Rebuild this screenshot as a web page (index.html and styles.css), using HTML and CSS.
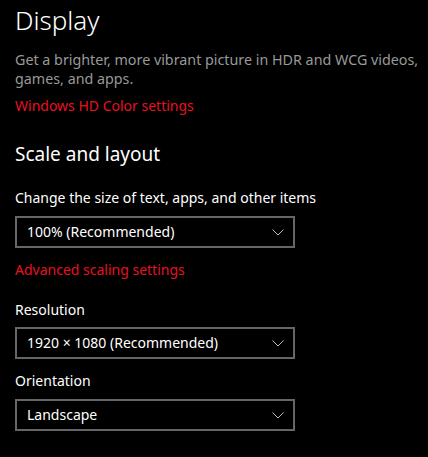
FILE: index.html
```html
<!DOCTYPE html>
<html>
<head>
<meta charset="utf-8">
<link rel="stylesheet" href="styles.css">
</head>
<body>
<div class="page">
  <h1 class="title">Display</h1>
  <p class="desc">Get a brighter, more vibrant picture in HDR and WCG videos, games, and apps.</p>
  <a class="link link-hd">Windows HD Color settings</a>
  <h2 class="section">Scale and layout</h2>
  <div class="label label-first">Change the size of text, apps, and other items</div>
  <div class="select select-a">
    <span>100% (Recommended)</span>
    <svg class="chev" width="12" height="7" viewBox="0 0 12 7"><polyline points="0.5,0.5 6,6 11.5,0.5" fill="none" stroke="#bdbdbd" stroke-width="1"/></svg>
  </div>
  <a class="link link-adv">Advanced scaling settings</a>
  <div class="label label-res">Resolution</div>
  <div class="select select-b">
    <span>1920 × 1080 (Recommended)</span>
    <svg class="chev" width="12" height="7" viewBox="0 0 12 7"><polyline points="0.5,0.5 6,6 11.5,0.5" fill="none" stroke="#bdbdbd" stroke-width="1"/></svg>
  </div>
  <div class="label label-ori">Orientation</div>
  <div class="select select-c">
    <span>Landscape</span>
    <svg class="chev" width="12" height="7" viewBox="0 0 12 7"><polyline points="0.5,0.5 6,6 11.5,0.5" fill="none" stroke="#bdbdbd" stroke-width="1"/></svg>
  </div>
</div>
</body>
</html>
```
FILE: styles.css
```css
html, body {
  margin: 0;
  padding: 0;
  background: #000;
}
body {
  width: 428px;
  height: 457px;
  overflow: hidden;
  font-family: "Noto Sans", "Open Sans", sans-serif;
  color: #fff;
}
.page {
  padding: 2px 0 0 15px;
  display: flex;
  flex-direction: column;
  align-items: flex-start;
}
.title {
  margin: 0;
  font-size: 26px;
  font-weight: 300;
  line-height: 36px;
}
.desc {
  margin: 12px 0 0;
  width: 408px;
  font-size: 14.3px;
  line-height: 19px;
  color: #999;
}
.link {
  display: block;
  font-size: 14px;
  line-height: 20px;
  color: #e81123;
}
.link-hd { margin-top: 8px; }
.section {
  margin: 24px 0 0;
  font-size: 19px;
  font-weight: 400;
  line-height: 28px;
}
.label {
  font-size: 14px;
  line-height: 20px;
}
.label-first { margin-top: 20px; }
.label-res { margin-top: 20px; }
.label-ori { margin-top: 12px; }
.select {
  box-sizing: border-box;
  width: 280px;
  height: 32px;
  border: 2px solid #666;
  padding: 0 9px 0 10px;
  display: flex;
  align-items: center;
  justify-content: space-between;
  font-size: 14px;
  line-height: 20px;
}
.select-a { margin-top: 8px; }
.link-adv { margin-top: 12px; }
.select-b { margin-top: 7px; }
.select-c { margin-top: 8px; }
.chev { display: block; }
```
